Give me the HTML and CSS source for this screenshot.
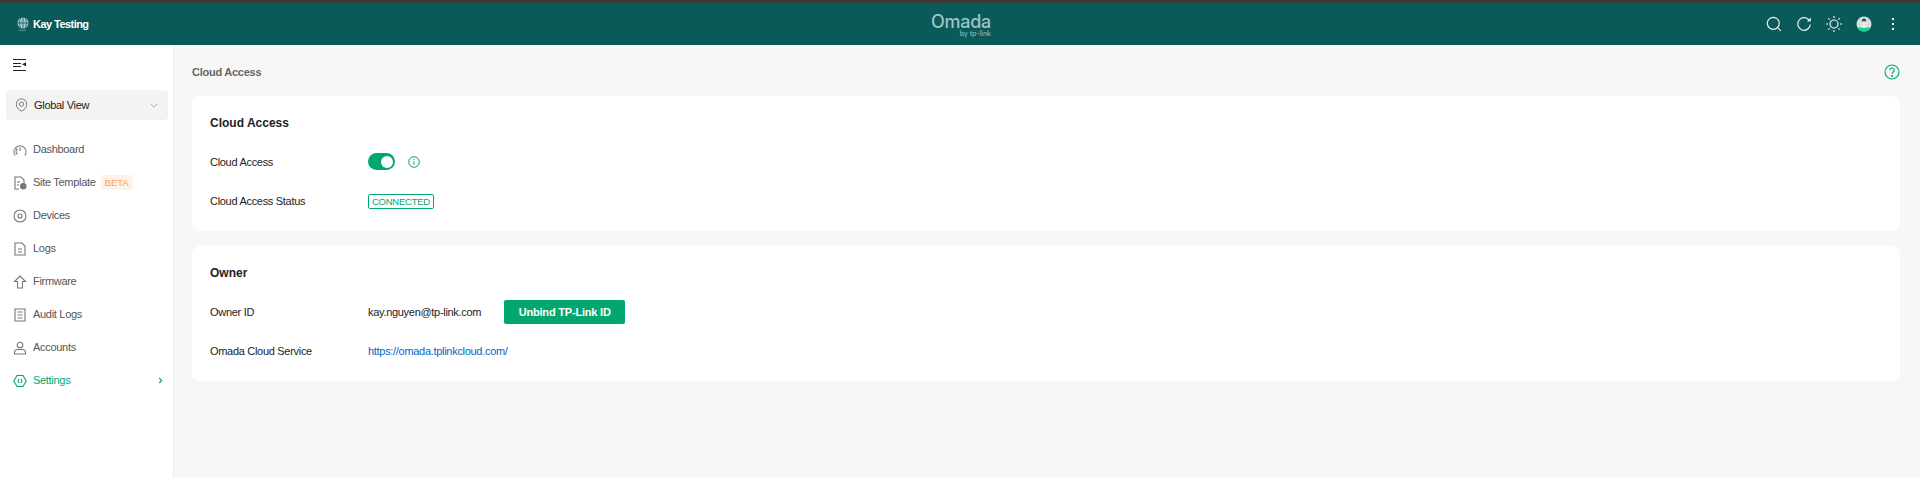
FILE: index.html
```html
<!DOCTYPE html>
<html lang="en">
<head>
  <meta charset="UTF-8" />
  <title>Cloud Access | Omada</title>
  <link rel="stylesheet" href="styles.css">
</head>
<body>
  <div class="topbar">
    <div class="org">
      <svg class="org-icon" viewBox="0 0 12 14" width="12" height="14"><circle cx="6" cy="6" r="5.5" fill="#a9cdcb"/><path d="M0.5 6h11M6 .5v11M3.500 1.500c-1.200 3-1.200 6 0 9M8.500 1.500c1.200 3 1.200 6 0 9" stroke="#0b5a5a" stroke-width=".8" fill="none"/><path d="M2 13.300h7" stroke="#7fb0ad" stroke-width=".7"/></svg>
      <strong>Kay Testing</strong>
    </div>
    <div class="brand">
      <span class="brand-name">Omada</span>
      <span class="brand-sub">by tp-link</span>
    </div>
    <div class="top-actions">
      <svg viewBox="0 0 16 16" width="16" height="16" fill="none" stroke="#e6f0ef" stroke-width="1.200"><circle cx="7.300" cy="7.300" r="6"/><path d="M11.800 11.800l3 3"/></svg>
      <svg viewBox="0 0 16 16" width="16" height="16" fill="none" stroke="#e6f0ef" stroke-width="1.200"><path d="M13.600 5a6.300 6.300 0 1 0 .7 3.500"/><path d="M14.800 1.500v4h-4z" fill="#e6f0ef" stroke="none"/></svg>
      <svg viewBox="0 0 16 16" width="16" height="16" fill="none" stroke="#e6f0ef" stroke-width="1.200"><circle cx="8" cy="8" r="4"/><path d="M8 0v2M8 14v2M0 8h2M14 8h2M2.300 2.300l1.400 1.400M12.300 12.300l1.400 1.400M2.300 13.700l1.400-1.400M12.300 3.700l1.400-1.400"/></svg>
      <svg viewBox="0 0 16 16" width="16" height="16"><circle cx="8" cy="8" r="7.500" fill="#d5dfe2"/><path d="M1.400 11.500h13.200a7.500 7.500 0 0 1-13.200 0z" fill="#17d68c"/><path d="M5.500 11.500c.2-1.500 1-2 1.600-2.500V8h1.800v1c.6.500 1.400 1 1.600 2.500z" fill="#f3f5f5"/><path d="M6 5.500C6 4 6.800 3 8 3s2 1 2 2.500l-.2 1.700c-.4 1.300-3.200 1.300-3.600 0z" fill="#f0e6df"/><path d="M5.900 5.800C5.600 3.600 6.800 2.600 8 2.600s2.400 1 2.100 3.200C9.500 5 6.500 5 5.900 5.800z" fill="#3a4548"/></svg>
      <svg class="more" viewBox="0 0 4 14" width="4" height="14" fill="#eef5f4"><rect x="1" y="1" width="2" height="2"/><rect x="1" y="6" width="2" height="2"/><rect x="1" y="11" width="2" height="2"/></svg>
    </div>
  </div>

  <div class="layout">
    <div class="sidebar">
      <button class="collapse-btn" aria-label="Collapse">
        <svg viewBox="0 0 14 12" width="14" height="12" fill="#222"><rect y="0" width="13" height="1"/><rect y="4" width="8" height="1"/><rect y="7" width="8" height="1"/><rect y="11" width="13" height="1"/><path d="M13 3.200v4.100l-4-2.050z"/></svg>
      </button>
      <div class="site-select">
        <svg viewBox="0 0 14 16" width="13" height="14" fill="none" stroke="#777" stroke-width="1.100"><path d="M7 15C4 13.500 1 11 1 7a6 6 0 0 1 12 0c0 4-3 6.500-6 8z"/><circle cx="7" cy="7" r="2.500"/></svg>
        <span>Global View</span>
        <svg class="chev" viewBox="0 0 10 6" width="8" height="5" fill="none" stroke="#aaa" stroke-width="1.200"><path d="M1 1l4 4 4-4"/></svg>
      </div>
      <a class="nav-item" href="#">
        <svg viewBox="0 0 14 14" fill="none" stroke="#777" stroke-width="1.100"><path d="M2.200 12.500A6 6 0 1 1 11.800 12.500M4.400 11.500a4 4 0 0 1 0-6M7 8V4.500"/></svg>
        <span>Dashboard</span>
      </a>
      <a class="nav-item" href="#">
        <svg viewBox="0 0 14 14" fill="none" stroke="#777" stroke-width="1.100"><path d="M6 13H2V1h6l3 3v3M4 6h3M4 9h2"/><circle cx="10.300" cy="10.300" r="2.700" fill="#777"/></svg>
        <span>Site Template</span>
        <span class="beta">BETA</span>
      </a>
      <a class="nav-item" href="#">
        <svg viewBox="0 0 14 14" fill="none" stroke="#777" stroke-width="1.100"><circle cx="7" cy="7" r="6"/><circle cx="7" cy="7" r="2"/></svg>
        <span>Devices</span>
      </a>
      <a class="nav-item" href="#">
        <svg viewBox="0 0 14 14" fill="none" stroke="#777" stroke-width="1.100"><path d="M2 1h7l3 3v9H2zM5 7h4M5 10h4"/></svg>
        <span>Logs</span>
      </a>
      <a class="nav-item" href="#">
        <svg viewBox="0 0 14 14" fill="none" stroke="#777" stroke-width="1.100"><path d="M7 1l5.500 5.500H9.500V13h-5V6.500h-3z"/></svg>
        <span>Firmware</span>
      </a>
      <a class="nav-item" href="#">
        <svg viewBox="0 0 14 14" fill="none" stroke="#777" stroke-width="1.100"><path d="M2 1h10v12H2zM4.500 4h5M4.500 7h5M4.500 10h5"/></svg>
        <span>Audit Logs</span>
      </a>
      <a class="nav-item" href="#">
        <svg viewBox="0 0 14 14" fill="none" stroke="#777" stroke-width="1.100"><circle cx="7" cy="4" r="2.800"/><path d="M1.500 13v-1.500c0-2 1.500-3 3-3h5c1.500 0 3 1 3 3V13z"/></svg>
        <span>Accounts</span>
      </a>
      <a class="nav-item active" href="#">
        <svg viewBox="0 0 14 14" fill="none" stroke="#00a870" stroke-width="1.100"><path d="M4 1.500h6L13.200 7 10 12.500H4L.8 7z"/><path d="M6 5L5 7l1 2M8 5l1 2-1 2"/></svg>
        <span>Settings</span>
        <svg class="nav-arrow" viewBox="0 0 6 8" width="5" height="7" fill="none" stroke="#00a870" stroke-width="1.300"><path d="M1.500 1l3 3-3 3"/></svg>
      </a>
    </div>

    <div class="main">
      <div class="page-head">
        <span class="crumb">Cloud Access</span>
        <svg viewBox="0 0 16 16" width="16" height="16" fill="none" stroke="#00a870" stroke-width="1.100"><circle cx="8" cy="8" r="7"/><path d="M5.800 6.200a2.200 2.200 0 1 1 3.400 1.800c-.8.500-1.200 1-1.200 2"/><circle cx="8" cy="12" r=".5" fill="#00a870"/></svg>
      </div>

      <div class="card">
        <h3>Cloud Access</h3>
        <div class="row">
          <label>Cloud Access</label>
          <div class="value">
            <span class="switch"><span class="knob"></span></span>
            <svg class="info" viewBox="0 0 12 12" width="12" height="12" fill="none" stroke="#00a870" stroke-width="1"><circle cx="6" cy="6" r="5.300"/><path d="M6 5.200v3.500M6 3.200v1"/></svg>
          </div>
        </div>
        <div class="row">
          <label>Cloud Access Status</label>
          <div class="value"><span class="tag">CONNECTED</span></div>
        </div>
      </div>

      <div class="card">
        <h3>Owner</h3>
        <div class="row">
          <label>Owner ID</label>
          <div class="value">
            <span>kay.nguyen@tp-link.com</span>
            <button class="btn">Unbind TP-Link ID</button>
          </div>
        </div>
        <div class="row">
          <label>Omada Cloud Service</label>
          <div class="value"><a class="link" href="#">https://omada.tplinkcloud.com/</a></div>
        </div>
      </div>
    </div>
  </div>
</body>
</html>
```

FILE: styles.css
```css
:root {
  --primary: #0b5a5a;
  --accent: #00a870;
  --bg: #f7f7f7;
}

* {
  box-sizing: border-box;
  margin: 0;
  padding: 0;
  font-family: 'Liberation Sans', Arial, sans-serif;
}

html, body {
  height: 100%;
  overflow: hidden;
}

body {
  display: flex;
  flex-direction: column;
  background: var(--bg);
  font-size: 11px;
  letter-spacing: -.3px;
  color: #222;
}

.topbar {
  height: 45px;
  flex: none;
  display: grid;
  grid-template-columns: 1fr auto 1fr;
  align-items: center;
  background: var(--primary);
  border-top: 3px solid #3a3c3c;
  padding: 0 25px 0 17px;
  color: #fff;
}

.org {
  display: flex;
  align-items: center;
  gap: 4px;
}

.org strong {
  font-size: 11px;
  letter-spacing: -.55px;
}

.brand {
  display: flex;
  flex-direction: column;
  align-items: flex-end;
  padding: 2px 0 0 10px;
  color: #9cc4c2;
  line-height: 1;
}

.brand-name {
  font-family: Inter, 'Liberation Sans', sans-serif;
  font-size: 18px;
  font-weight: 500;
  letter-spacing: -.3px;
}

.brand-sub {
  font-family: Inter, 'Liberation Sans', sans-serif;
  font-size: 7px;
  letter-spacing: 0;
  margin-top: -1px;
}

.top-actions {
  display: flex;
  align-items: center;
  justify-content: flex-end;
  gap: 14px;
}

.top-actions .more {
  margin-left: 5px;
}

.layout {
  flex: 1;
  display: flex;
  min-height: 0;
}

.sidebar {
  width: 174px;
  flex: none;
  background: #fff;
  border-right: 1px solid #eee;
}

.collapse-btn {
  display: block;
  background: transparent;
  border: none;
  margin: 14px 0 0 13px;
  height: 12px;
  cursor: pointer;
}

.site-select {
  display: flex;
  align-items: center;
  gap: 6px;
  height: 30px;
  margin: 19px 5px 12px 6px;
  padding: 0 10px 0 9px;
  background: #f3f3f3;
  border-radius: 4px;
}

.site-select .chev {
  margin-left: auto;
}

.nav-item {
  display: flex;
  align-items: center;
  height: 33px;
  padding: 0 10px 0 13px;
  color: #555;
  text-decoration: none;
}

.nav-item > svg:first-child {
  width: 14px;
  height: 14px;
  margin-right: 6px;
  position: relative;
  top: 1px;
}

.nav-item.active {
  color: var(--accent);
}

.nav-arrow {
  margin-left: auto;
  margin-top: 2px;
}

.beta {
  margin-left: 5px;
  padding: 0 4px;
  height: 15px;
  line-height: 16px;
  font-size: 9.500px;
  letter-spacing: 0;
  color: #f6a25a;
  background: #fff2e8;
  border-radius: 2px;
  position: relative;
  top: 1px;
}

.main {
  flex: 1;
  padding: 0 20px 0 18px;
}

.page-head {
  display: flex;
  justify-content: space-between;
  align-items: center;
  height: 51px;
  padding-top: 2px;
}

.crumb {
  font-weight: 700;
  color: #666;
  letter-spacing: -.25px;
}

.card {
  background: #fff;
  border-radius: 8px;
  padding: 19px 18px 0;
  height: 135px;
  margin-bottom: 15px;
}

.card h3 {
  font-size: 12px;
  font-weight: 700;
  letter-spacing: 0;
  line-height: 16px;
  color: #222;
  margin-bottom: 11px;
}

.row {
  display: flex;
  align-items: center;
  height: 39px;
}

.row label {
  width: 158px;
}

.value {
  display: flex;
  align-items: center;
}

.switch {
  width: 27px;
  height: 17px;
  border-radius: 9px;
  background: var(--accent);
  display: flex;
  justify-content: flex-end;
  align-items: center;
  padding-right: 2px;
}

.knob {
  width: 12px;
  height: 12px;
  border-radius: 50%;
  background: #fff;
}

.info {
  margin-left: 13px;
}

.tag {
  height: 15px;
  line-height: 13px;
  margin-top: 1px;
  padding: 0 3px;
  font-size: 9.500px;
  letter-spacing: -.25px;
  color: var(--accent);
  border: 1px solid var(--accent);
  border-radius: 2px;
}

.btn {
  margin-left: 23px;
  width: 121px;
  height: 24px;
  background: var(--accent);
  color: #fff;
  border: none;
  border-radius: 2px;
  font-size: 11px;
  font-weight: 700;
  letter-spacing: -.2px;
}

.link {
  color: #0a61cc;
  text-decoration: none;
}
```
